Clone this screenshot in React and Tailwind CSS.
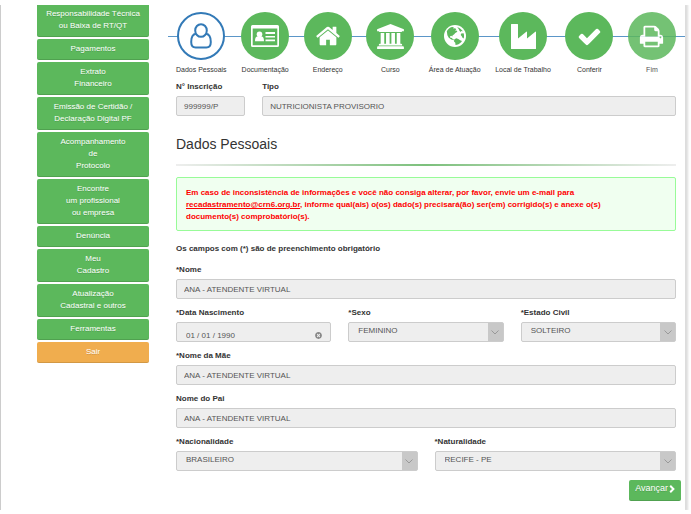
import React, { useState } from 'react';
import { FaTimesCircle } from 'react-icons/fa';

const menuItems = [
  ['Responsabilidade Técnica', 'ou Baixa de RT/QT'],
  ['Pagamentos'],
  ['Extrato', 'Financeiro'],
  ['Emissão de Certidão /', 'Declaração Digital PF'],
  ['Acompanhamento', 'de', 'Protocolo'],
  ['Encontre', 'um profissional', 'ou empresa'],
  ['Denúncia'],
  ['Meu', 'Cadastro'],
  ['Atualização', 'Cadastral e outros'],
  ['Ferramentas'],
  ['Sair'],
];

const UserIcon = () => (
  <svg viewBox="0 0 22 26" className="w-[22px] h-[26px] shrink-0" fill="none" stroke="currentColor" strokeWidth="2">
    <ellipse cx="11" cy="7.500" rx="5.800" ry="6.300" />
    <path d="M6 10.800C2.300 11.300 1.200 14.800 1.200 19C1.200 22.500 3 24.500 5.600 24.500H16.400C19 24.500 20.800 22.500 20.800 19C20.800 14.800 19.700 11.300 16 10.800" />
  </svg>
);

const CardIcon = () => (
  <svg viewBox="0 0 28 22" className="w-[28px] h-[22px]" fill="currentColor">
    <path fillRule="evenodd" d="M1.500 0H26.500Q28 0 28 1.500V20.500Q28 22 26.500 22H1.500Q0 22 0 20.500V1.500Q0 0 1.500 0ZM1.700 3.500V20.300H26.300V3.500Z" />
    <circle cx="8.500" cy="9.300" r="2.800" />
    <path d="M4 16.200C4 13 5 11.500 6.500 11.300Q8.500 12.900 10.500 11.300C12 11.500 13 13 13 16.200Z" />
    <path d="M14.500 7H24V9H14.500ZM14.500 11H24V12.500H14.500ZM14.500 14.500H24V16.200H14.500Z" />
  </svg>
);

const HomeIcon = () => (
  <svg viewBox="0 0 1792 1792" className="w-[26px] h-[26px]" fill="currentColor">
    <path d="M1472 992v480q0 26-19 45t-45 19h-384v-384h-256v384h-384q-26 0-45-19t-19-45v-480q0-1 .5-3t.5-3l575-474 575 474q1 2 1 6zm223-69l-62 74q-8 9-21 11h-3q-13 0-21-7l-692-577-692 577q-12 8-24 7-13-2-21-11l-62-74q-8-10-7-23.500t11-21.500l719-599q32-26 76-26t76 26l244 204v-195q0-14 9-23t23-9h192q14 0 23 9t9 23v408l219 182q10 8 11 21.500t-7 23.500z" />
  </svg>
);

const UniversityIcon = () => (
  <svg viewBox="0 0 1920 1792" className="w-[27px] h-[25px]" fill="currentColor">
    <path d="M960 0l960 384v128h-128q0 26-20.500 45t-48.500 19h-1526q-28 0-48.500-19t-20.500-45h-128v-128zm-704 640h256v768h128v-768h256v768h128v-768h256v768h128v-768h256v768h59q28 0 48.500 19t20.500 45v64h-1664v-64q0-26 20.500-45t48.500-19h59v-768zm1595 960q28 0 48.500 19t20.500 45v128h-1920v-128q0-26 20.500-45t48.500-19h1782z" />
  </svg>
);

const GlobeIcon = () => (
  <svg viewBox="0 0 22 22" className="w-[22px] h-[22px]">
    <circle cx="11" cy="11" r="11" fill="white" />
    <g fill="#5cb85c">
      <path d="M2.800 6.300C4 4 5.800 2.700 8 2.100L9.800 2.300L9.200 3.600L11.200 3.200L12.300 4.400L10.800 5.600L12.500 5.500L13.400 6.800L11.300 8L10 9.500L8.700 10.200L8.300 11.600L7.200 10.800L5.900 11.500L6.400 12.800L8.100 13L8.600 14.200L10.200 14.600L9.500 15.200L7.300 14.600L4.800 12.700L3.400 10.200Z" />
      <path d="M10.200 14.400L12.300 13.300L14.300 14L16.200 15.300L18 16C17 17.800 15.200 19.200 13 19.800L11.500 19.900L11.300 17.800L10 16.400Z" />
      <path d="M13.200 2.200C15.600 2.800 17.600 4.200 18.800 6.300L17.400 6L16.500 6.900L15.300 5.600L14.700 3.900Z" />
      <path d="M17.200 8.600L19.600 8.200C20.200 10 20.200 11.800 19.700 13.400L18.300 12.600L17.600 11L16.700 10Z" />
    </g>
  </svg>
);

const FactoryIcon = () => (
  <svg viewBox="0 0 25 25" className="w-[25px] h-[25px]" fill="currentColor">
    <path d="M0 0.500Q0 0 0.500 0H6.500Q7 0 7 0.500V14.500L15.300 7.800Q16 7.300 16 8V14.500L24.300 7.800Q25 7.300 25 8V24.500Q25 25 24.500 25H0.500Q0 25 0 24.500Z" />
  </svg>
);

const CheckIcon = () => (
  <svg viewBox="0 0 1792 1792" className="w-[25px] h-[25px]" fill="currentColor">
    <path d="M1671 566q0 40-28 68l-724 724-136 136q-28 28-68 28t-68-28l-136-136-362-362q-28-28-28-68t28-68l136-136q28-28 68-28t68 28l294 295 656-657q28-28 68-28t68 28l136 136q28 28 28 68z" />
  </svg>
);

const PrintIcon = () => (
  <svg viewBox="0 0 1792 1792" className="w-[25px] h-[25px]" fill="currentColor">
    <path d="M448 1536h896v-256h-896v256zm0-640h896v-384h-160q-40 0-68-28t-28-68v-160h-640v640zm1152 64q0-26-19-45t-45-19-45 19-19 45 19 45 45 19 45-19 19-45zm128 0v416q0 13-9.500 22.500t-22.500 9.500h-224v160q0 40-28 68t-68 28h-960q-40 0-68-28t-28-68v-160h-224q-13 0-22.500-9.500t-9.500-22.500v-416q0-79 56.500-135.500t135.500-56.500h64v-544q0-40 28-68t68-28h672q40 0 88 20t76 48l152 152q28 28 48 76t20 88v256h64q79 0 135.500 56.500t56.500 135.500z" />
  </svg>
);

const steps = [
  { label: 'Dados Pessoais', icon: <UserIcon />, active: true },
  { label: 'Documentação', icon: <CardIcon /> },
  { label: 'Endereço', icon: <HomeIcon /> },
  { label: 'Curso', icon: <UniversityIcon /> },
  { label: 'Área de Atuação', icon: <GlobeIcon /> },
  { label: 'Local de Trabalho', icon: <FactoryIcon /> },
  { label: 'Conferir', icon: <CheckIcon /> },
  { label: 'Fim', icon: <PrintIcon />, disabled: true },
];

const Sidebar = () => (
  <nav className="w-28 shrink-0 flex flex-col gap-[2px]">
    {menuItems.map((lines, index) => (
      <button
        key={lines[0]}
        type="button"
        className={`w-full px-1 pb-[5px] text-[8px] leading-[12px] text-center text-white text-shadow-2xs shadow-[inset_0_-1px_0_rgba(0,0,0,0.12)] ${
          index === 0 ? 'pt-[3px] rounded-b-[2px]' : 'pt-1 rounded-[2px]'
        } ${lines[0] === 'Sair' ? 'bg-[#f0ad4e]' : 'bg-[#5cb85c]'}`}
      >
        {lines.map((line) => (
          <span key={line} className="block whitespace-nowrap">{line}</span>
        ))}
      </button>
    ))}
  </nav>
);

const Wizard = () => (
  <div className="relative">
    <div className="absolute -left-2 -right-[9px] top-6 h-px bg-[#5b96c8]"></div>
    <ol className="relative flex justify-between">
      {steps.map((step) => (
        <li key={step.label} className={`flex flex-col items-center gap-1 ${step.disabled ? 'opacity-85' : ''}`}>
          <button
            type="button"
            aria-label={step.label}
            disabled={step.disabled}
            className={`w-12 h-12 rounded-full flex items-center justify-center ${
              step.active ? 'bg-white border-2 border-[#337ab7] text-[#337ab7]' : 'bg-[#5cb85c] text-white'
            }`}
          >
            {step.icon}
          </button>
          <span className="text-[7px] leading-[12px] whitespace-nowrap text-[#333]">{step.label}</span>
        </li>
      ))}
    </ol>
  </div>
);

const boxStyle = 'block w-full h-5 bg-[#eee] border border-[#ccc] rounded-[2px] text-[8px] text-[#555]';

const Field = ({ id, label, className, children }) => (
  <div className={`flex flex-col gap-[3px] ${className}`}>
    <label htmlFor={id} className="text-[8px] leading-[12px] font-bold text-[#333]">{label}</label>
    {children}
  </div>
);

const TextField = ({ id, label, value, className }) => (
  <Field id={id} label={label} className={className}>
    <input id={id} type="text" readOnly value={value} className={`${boxStyle} px-[7px]`} />
  </Field>
);

const DateField = ({ id, label, className }) => {
  const [value, setValue] = useState('01 / 01 / 1990');

  return (
    <Field id={id} label={label} className={className}>
      <div className="relative">
        <input
          id={id}
          type="text"
          value={value}
          onChange={(e) => setValue(e.target.value)}
          className={`${boxStyle} pl-[9px] pr-5 pt-[6px]`}
        />
        <button
          type="button"
          aria-label="Limpar"
          onClick={() => setValue('')}
          className="absolute right-[9px] bottom-[3px] text-[#888]"
        >
          <FaTimesCircle size={7} />
        </button>
      </div>
    </Field>
  );
};

const SelectField = ({ id, label, value, className }) => (
  <Field id={id} label={label} className={className}>
    <div className="relative">
      <select id={id} defaultValue={value} className={`${boxStyle} appearance-none pl-[9px] pr-5 pb-[3px]`}>
        <option>{value}</option>
      </select>
      <span className="absolute right-px top-px bottom-px w-[15px] bg-[#c8c8c8] flex items-center justify-center pointer-events-none">
        <svg viewBox="0 0 8 5" className="w-2 h-[5px]" fill="none" stroke="#999">
          <path d="M0.500 0.500L4 4L7.500 0.500" />
        </svg>
      </span>
    </div>
  </Field>
);

const App = () => {
  return (
    <div className="bg-white py-[5px] pr-[6px] font-['Liberation_Sans',Arial,sans-serif] overflow-hidden">
      <div className="flex gap-[27px] pl-9 pr-[9px] pb-[9px] border-l border-[#ccc] shadow-[2px_0_2px_1px_#ddd] [clip-path:inset(0_-6px_0_0)]">
        <Sidebar />

        <main className="flex-1 min-w-0 pt-[7px]">
          <Wizard />

          <form onSubmit={(e) => e.preventDefault()}>
            <div className="grid grid-cols-12 gap-x-[17px] mt-[5px]">
              <TextField id="inscricao" label="N° Inscrição" value="999999/P" className="col-span-2" />
              <TextField id="tipo" label="Tipo" value="NUTRICIONISTA PROVISORIO" className="col-span-10" />
            </div>

            <h1 className="mt-5 text-[14px] leading-[16px] text-[#333]">Dados Pessoais</h1>
            <div className="mt-3 h-[2px] bg-linear-to-r from-[#eee] via-[#7cc07c] to-[#eee]"></div>

            <div className="mt-[11px] px-[9px] pt-[9px] pb-[7px] bg-[#f0fff0] border border-[#98fb98] rounded-[2px] text-[8px] leading-[12px] font-bold text-[#f00]">
              Em caso de inconsistência de informações e você não consiga alterar, por favor, envie um e-mail para{' '}
              <br />
              <a href="mailto:recadastramento@crn6.org.br" className="underline">recadastramento@crn6.org.br</a>, informe
              qual(ais) o(os) dado(s) precisará(ão) ser(em) corrigido(s) e anexe o(s)
              <br />
              documento(s) comprobatório(s).
            </div>

            <p className="mt-3 mb-[9px] text-[8px] leading-[12px] font-bold text-[#333]">
              Os campos com (*) são de preenchimento obrigatório
            </p>

            <div className="grid grid-cols-12 gap-x-[17px] gap-y-2">
              <TextField id="nome" label="*Nome" value="ANA - ATENDENTE VIRTUAL" className="col-span-12" />
              <DateField id="nascimento" label="*Data Nascimento" className="col-span-4" />
              <SelectField id="sexo" label="*Sexo" value="FEMININO" className="col-span-4" />
              <SelectField id="civil" label="*Estado Civil" value="SOLTEIRO" className="col-span-4" />
              <TextField id="mae" label="*Nome da Mãe" value="ANA - ATENDENTE VIRTUAL" className="col-span-12" />
              <TextField id="pai" label="Nome do Pai" value="ANA - ATENDENTE VIRTUAL" className="col-span-12" />
              <SelectField id="nacionalidade" label="*Nacionalidade" value="BRASILEIRO" className="col-span-6" />
              <SelectField id="naturalidade" label="*Naturalidade" value="RECIFE - PE" className="col-span-6" />
            </div>

            <div className="flex justify-end mt-[9px] -mr-[5px]">
              <button
                type="submit"
                className="flex items-center gap-px h-[21px] px-[6px] pb-[3px] bg-[#5cb85c] rounded-[2px] text-[9px] text-white text-shadow-2xs shadow-[inset_0_-1px_0_rgba(0,0,0,0.12)]"
              >
                Avançar
                <svg viewBox="0 0 6 8" className="w-[6px] h-2" fill="none" stroke="currentColor" strokeWidth="2">
                  <path d="M1.200 0.800L4.400 4L1.200 7.200" />
                </svg>
              </button>
            </div>
          </form>
        </main>
      </div>
    </div>
  );
};

export default App;
